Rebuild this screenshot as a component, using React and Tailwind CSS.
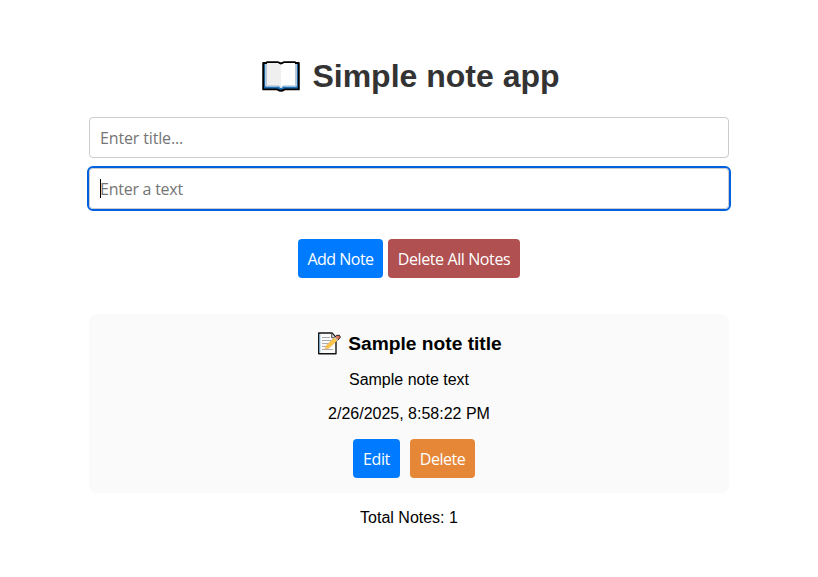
function BookIcon() {
  return (
    <svg width="38" height="31" viewBox="0 0 38 31" className="shrink-0">
      <path d="M1.2 2H15.5L19 3L22.5 2H36.8V28.4H22.5Q19 31 15.5 28.4H1.2Z" fill="#1f6fb8" stroke="#000" strokeWidth="1.9" strokeLinejoin="round" />
      <path d="M3 3H5V25H3ZM33 3H35V25H33Z" fill="#b4c8dc" />
      <path d="M5 2H17L19 3.2V26.5L17 24.8H5Z" fill="#efeff0" />
      <path d="M19 3.2L21 2H33V24.8H21L19 26.5Z" fill="#fff" />
      <path d="M3.5 25.2H16.5L19 26.8L21.5 25.2H34.5" fill="none" stroke="#d5dde5" strokeWidth="1" />
      <path d="M1.2 2.2H4L5 1.2H16L19 2.6L22 1.2H33L34 2.2H36.8" fill="none" stroke="#000" strokeWidth="1.7" />
    </svg>
  );
}

function MemoIcon() {
  return (
    <svg width="24" height="23" viewBox="0 0 24 23" className="shrink-0">
      <path d="M1.7 1H15L19 5.5V21.8H1.7Z" fill="#fafafa" stroke="#151515" strokeWidth="1.4" strokeLinejoin="round" />
      <path d="M2.8 2V20.8" stroke="#5ba5dc" strokeWidth=".8" />
      <path d="M14.7 1.5V5.8H18.5" fill="#ddd" stroke="#222" strokeWidth=".8" />
      <path d="M5 5.5H13M5 8.5H15M5 11.5H13M5 14.5H9M5 17.5H16" stroke="#a8abb0" strokeWidth="1" />
      <path d="M7.7 17.3L9.1 13.8L18.5 4.5L21.5 7.3L11.7 16.2Z" fill="#fcc44b" stroke="#e0a848" strokeWidth=".5" />
      <path d="M7.7 17.3L8.8 14.7L10.3 16.3Z" fill="#edc68e" />
      <path d="M17.5 5.4L19.8 3.3Q23.2 2.3 23.4 5.2L20.8 8.2Z" fill="#dd755c" stroke="#222" strokeWidth="1" />
      <path d="M17.5 5.4L20.6 8.3" stroke="#d9dadb" strokeWidth="1.2" />
    </svg>
  );
}

const fieldClass =
  "block h-[41px] w-full rounded-[4px] border border-[#ccc] bg-white px-[10px] text-base text-black placeholder:text-[#757575] placeholder:opacity-100";

function Button({ className, children }) {
  return (
    <button className={`h-[39px] whitespace-nowrap rounded-[4px] text-center text-base text-white font-['Open_Sans','Noto_Sans',sans-serif] ${className}`}>
      {children}
    </button>
  );
}

export default function App() {
  return (
    <main className="min-h-[577px] bg-white font-['Liberation_Sans',Arial,sans-serif] text-base text-black">
      <div className="mx-auto flex w-[640px] flex-col items-center pt-[57px]">
        <h1 className="flex h-[38px] items-center gap-[12px] whitespace-nowrap pl-[4px] text-[32px] font-bold leading-[38px] text-[#333]">
          <BookIcon />
          <span>Simple note app</span>
        </h1>

        <div className="mt-[22px] flex w-full flex-col gap-[10px] font-['Open_Sans','Noto_Sans',sans-serif]">
          <input className={`${fieldClass} tracking-[-0.15px]`} placeholder="Enter title..." />
          <div className="relative">
            <input className={`${fieldClass} tracking-[-0.25px] outline-2 outline-[#0060df]`} placeholder="Enter a text" />
            <span className="absolute left-[11px] top-[11px] h-[19px] w-px bg-black" />
          </div>
        </div>

        <div className="mt-[30px] flex gap-[5px]">
          <Button className="w-[85px] bg-[#007bff] tracking-[-0.5px]">Add Note</Button>
          <Button className="w-[132px] bg-[#b05050] tracking-[-0.4px]">Delete All Notes</Button>
        </div>

        <section className="mt-[36px] flex h-[179px] w-full flex-col items-center rounded-[8px] bg-[#fafafa] pt-[18px]">
          <h2 className="flex h-[22px] items-center gap-[7px] whitespace-nowrap pl-px text-[19.2px] font-bold leading-[22px]">
            <MemoIcon />
            <span className="pt-px">Sample note title</span>
          </h2>
          <p className="mt-[17px] h-[18px] leading-[18px]">Sample note text</p>
          <p className="mt-[16px] h-[18px] leading-[18px]">2/26/2025, 8:58:22 PM</p>
          <div className="mt-[16px] flex gap-[10px] pl-[10px]">
            <Button className="w-[47px] bg-[#007bff] tracking-[-0.4px]">Edit</Button>
            <Button className="w-[65px] bg-[#e68737] tracking-[-0.5px]">Delete</Button>
          </div>
        </section>

        <p className="mt-[16px] h-[18px] leading-[18px]">Total Notes: 1</p>
      </div>
    </main>
  );
}
